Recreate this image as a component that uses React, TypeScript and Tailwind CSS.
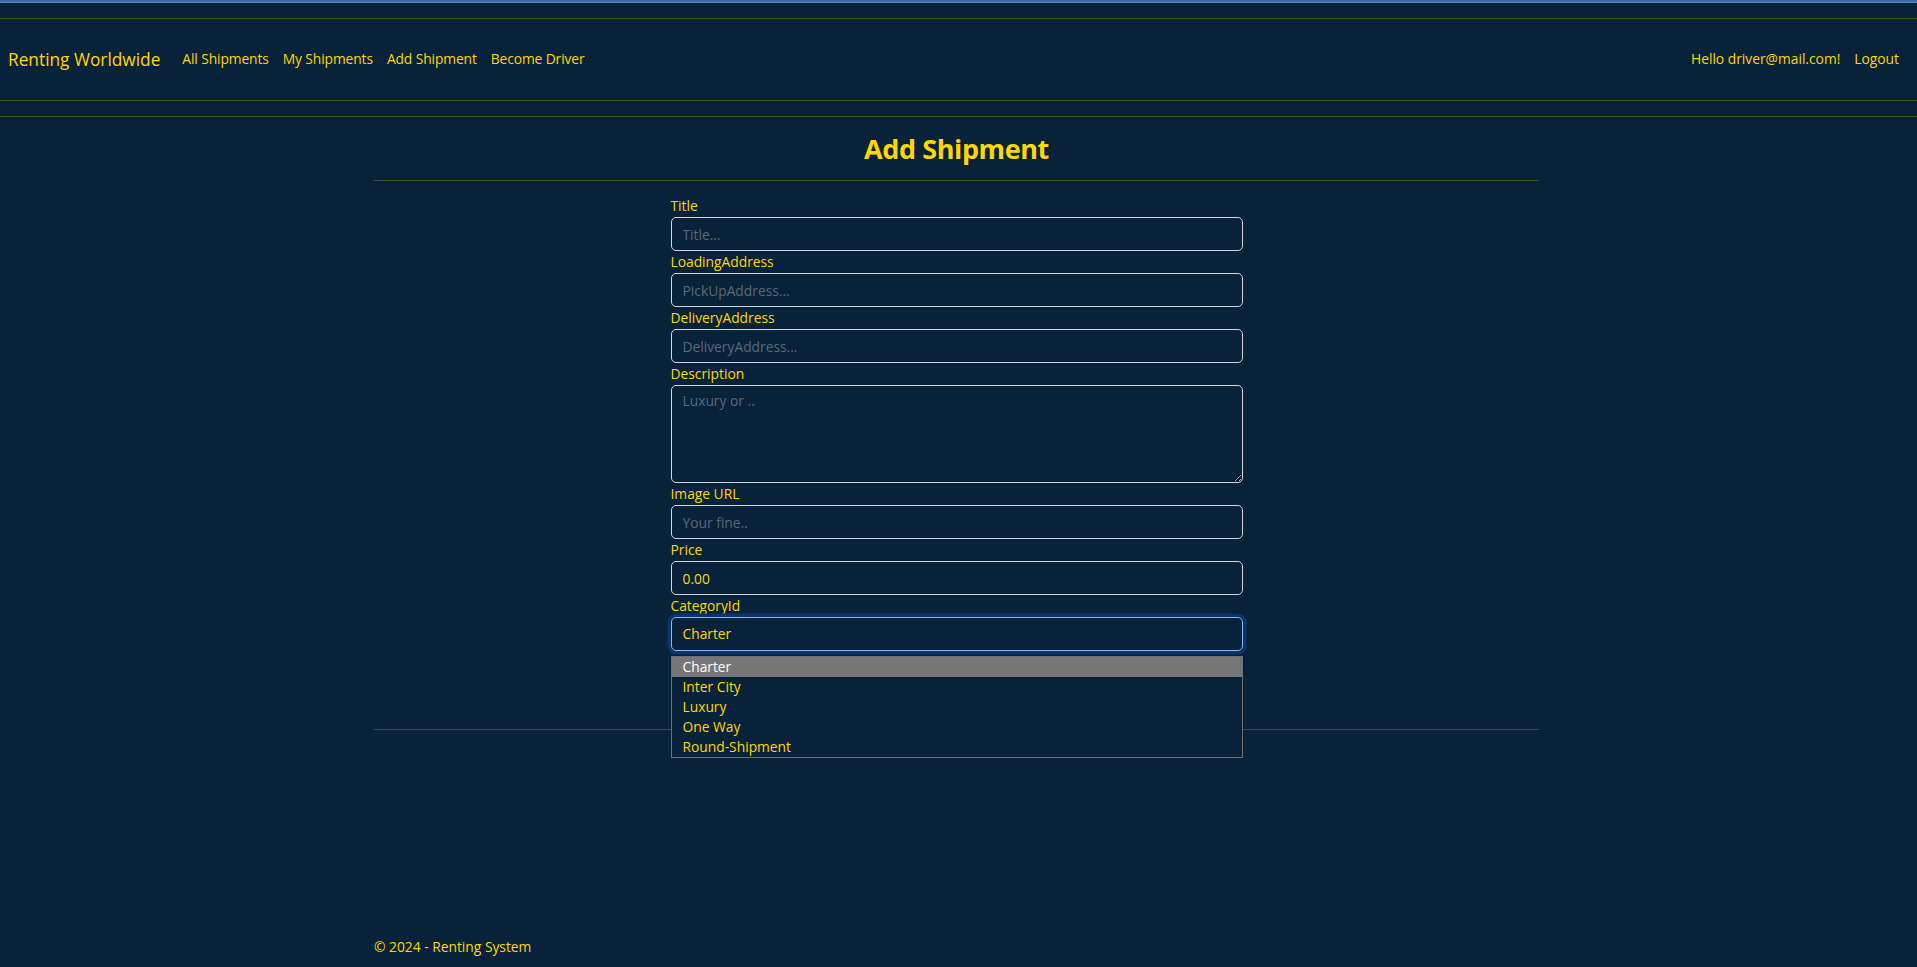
import React from 'react';

const fields = [
    { label: 'Title', placeholder: 'Title...' },
    { label: 'LoadingAddress', placeholder: 'PickUpAddress...' },
    { label: 'DeliveryAddress', placeholder: 'DeliveryAddress...' },
];

const categories = ['Charter', 'Inter City', 'Luxury', 'One Way', 'Round-Shipment'];

const inputClass =
    'block w-full h-[34px] bg-transparent border border-[#d3d7dd] rounded-[5px] px-[11px] text-[13.8px] text-[#ffd700] placeholder:text-[#5b6874] outline-none';

const Label: React.FC<{ children: React.ReactNode }> = ({ children }) => (
    <label className="block h-[22px] leading-[22px] text-[13.8px] text-[#ffd700]">{children}</label>
);

export default function App() {
    return (
        <div
            className="h-[967px] bg-[#08223a] flex flex-col text-[#ffd700] overflow-hidden"
            style={{ fontFamily: '"Open Sans", "Noto Sans", sans-serif' }}
        >
            <div className="h-[3px] bg-[#3a6cab] border-b border-[#5b86bd]" />
            <div className="h-[15px]" />

            <header className="h-[83px] border-y border-[#4a4a2a] flex items-center justify-between pl-[8px] pr-[11px]">
                <nav className="flex items-center">
                    <a className="text-[17.3px] mr-[15px]">Renting Worldwide</a>
                    <a className="px-[7px] text-[13.8px] tracking-[-0.1px]">All Shipments</a>
                    <a className="px-[7px] text-[13.8px] tracking-[-0.1px]">My Shipments</a>
                    <a className="px-[7px] text-[13.8px] tracking-[-0.1px]">Add Shipment</a>
                    <a className="px-[7px] text-[13.8px] tracking-[-0.1px]">Become Driver</a>
                </nav>
                <div className="flex items-center text-[13.8px]">
                    <span className="px-[7px]">Hello driver@mail.com!</span>
                    <a className="px-[7px]">Logout</a>
                </div>
            </header>

            <div className="h-[15px]" />
            <div className="border-t border-[#4a4a2a]" />

            <main className="flex-1 ml-[374px] w-[1165px]">
                <h2 className="mt-[14px] h-[35px] leading-[35px] text-center text-[27px] font-bold tracking-[-0.4px]">
                    Add Shipment
                </h2>
                <hr className="mt-[14px] border-t border-[#4a4a2a]" />

                <form className="mx-auto w-[572px] mt-[14px]">
                    {fields.map(f => (
                        <div key={f.label}>
                            <Label>{f.label}</Label>
                            <input className={inputClass} placeholder={f.placeholder} />
                        </div>
                    ))}
                    <Label>Description</Label>
                    <textarea
                        className="block w-full h-[98px] bg-transparent border border-[#d3d7dd] rounded-[5px] px-[11px] py-[5px] text-[13.8px] text-[#ffd700] placeholder:text-[#5b6874] outline-none"
                        placeholder="Luxury or .."
                    />
                    <Label>Image URL</Label>
                    <input className={inputClass} placeholder="Your fine.." />
                    <Label>Price</Label>
                    <input className={inputClass} defaultValue="0.00" />
                    <Label>CategoryId</Label>
                    <div className="relative">
                        <div className="h-[34px] border border-[#86b7fe] rounded-[5px] px-[11px] flex items-center text-[13.8px] shadow-[0_0_0_3.6px_#09356b]">
                            Charter
                        </div>
                        <ul className="absolute left-0 top-[39px] w-full border border-[#6b6e72] bg-[#08223a] z-10">
                            {categories.map((c, i) => (
                                <li
                                    key={c}
                                    className={`h-[20px] leading-[20px] pl-[11px] text-[13.8px] ${i === 0 ? 'bg-[#767676] text-white' : ''}`}
                                >
                                    {c}
                                </li>
                            ))}
                        </ul>
                    </div>
                </form>

                <hr className="mt-[78px] border-t border-[#3e4a4f]" />
            </main>

            <footer className="ml-[374px] pb-[9px] text-[13.8px] leading-[22px]">© 2024 - Renting System</footer>
        </div>
    );
}
